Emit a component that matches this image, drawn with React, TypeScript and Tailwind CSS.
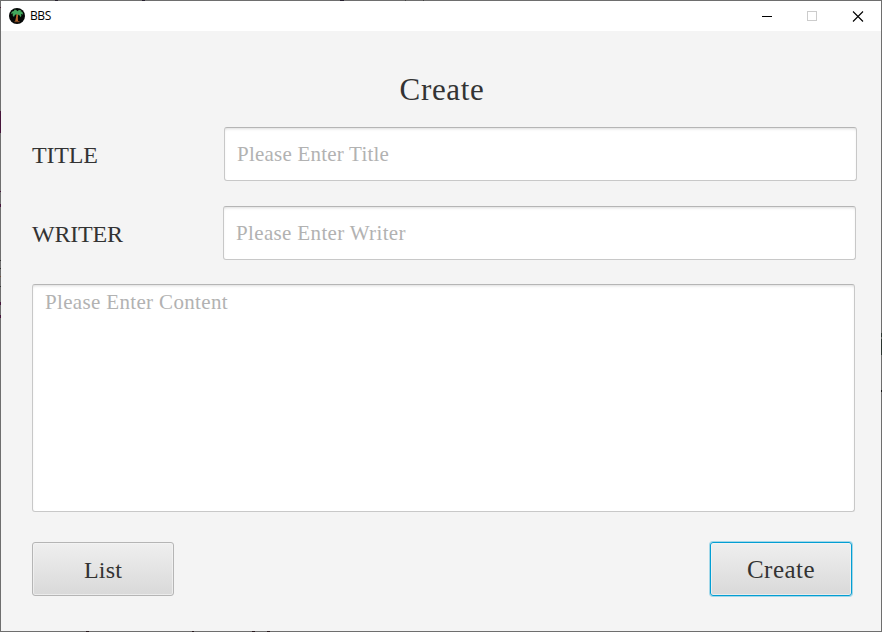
import type { ReactNode } from 'react';

const serif = "font-['Liberation_Serif',serif]";

function PalmIcon() {
  return (
    <svg className="-mt-px ml-2 h-4 w-4 shrink-0" viewBox="0 0 16 16">
      <circle cx="8" cy="8" r="8" fill="#050807" />
      <path d="M7.4 5.5 9.4 5.8C8.8 8.4 8.7 11 9.2 13.5H6.1C6.7 11 7.3 8.5 7.4 5.5Z" fill="#b5652d" />
      <path d="M5.5 13h5v1.2h-5z" fill="#7a4420" />
      <path d="M8.2 6.4C6.5 6 5.6 7 5 9 3.4 8 3.2 6.4 4.4 5.6 3.6 5.4 2.9 5.6 2.2 6.2 2.2 4 3.6 2.9 5.4 3.1L4.8 2C6.6 1.4 8 2.3 8.4 3.3 9.4 1.9 11.2 1.7 12.4 2.7L11.4 3.3C13.2 3.4 14.2 4.8 13.8 6.8 13.2 6 12.6 5.8 12 5.9 12.6 7 12.4 8.4 11.6 9.2 11.2 7.6 10 6.4 8.2 6.4Z" fill="#43a85c" />
    </svg>
  );
}

function TitleBar() {
  return (
    <header className="flex h-[30px] shrink-0 items-center bg-white">
      <PalmIcon />
      <span className="ml-[5px] font-['Open_Sans',sans-serif] text-[12px] leading-4 tracking-[-0.4px] text-black">BBS</span>
      <svg className="ml-auto mr-[17px] h-[11px] w-[102px]" viewBox="0 0 102 11" fill="none" shapeRendering="crispEdges">
        <path d="M0 5.5h10" stroke="#000" />
        <path d="M45.5.5h9v9h-9z" stroke="#ccc" />
        <path d="m91 .5 10 10m0-10-10 10" stroke="#000" strokeWidth="1.1" shapeRendering="auto" />
      </svg>
    </header>
  );
}

function Label({ children }: { children: ReactNode }) {
  return <label className="pt-0.5 text-[24px] leading-7 tracking-[-0.2px] text-[#333]">{children}</label>;
}

const field =
  'block resize-none rounded-[3px] border border-[#c8c8c8] border-t-[#b5b5b5] bg-white text-[21px] shadow-[inset_0_2px_3px_-1px_#ddd] outline-none placeholder:text-[#b2b2b2] placeholder:opacity-100';

const button =
  'h-[54px] rounded-[3px] border bg-linear-to-b from-[#efefef] to-[#d9d9d9] pt-0.5 leading-7 text-[#333]';

const marks = [
  'left-[55px] top-0 h-px w-[3px] bg-[#26202e]',
  'left-[142px] top-0 h-px w-[3px] bg-[#26202e]',
  'left-[340px] top-0 h-px w-[4px] bg-[#26202e]',
  'left-[405px] top-0 h-px w-px bg-[#444]',
  'left-[423px] top-0 h-px w-px bg-[#444]',
  'left-0 top-[7px] h-px w-px bg-[#50213f]',
  'left-0 top-[111px] h-[22px] w-px bg-[#46153a]',
  'left-0 top-[191px] h-px w-px bg-[#46153a]',
  'left-0 top-[204px] h-[3px] w-px bg-[#46153a]',
  'left-0 top-[260px] h-px w-px bg-[#333]',
  'left-0 top-[268px] h-px w-px bg-[#333]',
  'left-0 top-[276px] h-px w-px bg-[#76513b]',
  'left-0 top-[286px] h-px w-px bg-[#333]',
  'left-0 top-[302px] h-[3px] w-px bg-[#46153a]',
  'left-0 top-[315px] h-[3px] w-px bg-[#46153a]',
  'right-0 top-[333px] h-[4px] w-px bg-[#29332e]',
  'right-0 top-[339px] h-[16px] w-px bg-[#29332e]',
  'right-0 top-[390px] h-[2px] w-px bg-[#111]',
  'left-[86px] bottom-0 h-px w-[3px] bg-[#26171c]',
  'left-[192px] bottom-0 h-px w-[2px] bg-[#26171c]',
  'left-[252px] bottom-0 h-px w-[3px] bg-[#26171c]',
  'left-[267px] bottom-0 h-px w-[3px] bg-[#26171c]',
];

export default function App() {
  return (
    <div className={`relative flex h-[632px] w-[882px] flex-col border border-[#6e6e6e] bg-[#f4f4f4] ${serif}`}>
      <TitleBar />
      <main className="flex flex-1 flex-col pl-[31px]">
        <h1 className="mt-[41px] h-[35px] w-[820px] text-center text-[31px] leading-9 tracking-[0.65px] text-[#333]">Create</h1>
        <div className="mt-5 flex h-[54px] w-[825px] items-center justify-between">
          <Label>TITLE</Label>
          <input className={`${field} h-[54px] w-[633px] px-3 tracking-[0.22px]`} placeholder="Please Enter Title" />
        </div>
        <div className="mt-[25px] flex h-[54px] w-[824px] items-center justify-between">
          <Label>WRITER</Label>
          <input className={`${field} h-[54px] w-[633px] px-3 tracking-[0.35px]`} placeholder="Please Enter Writer" />
        </div>
        <textarea
          className={`${field} mt-6 h-[228px] w-[823px] px-3 py-[5px] leading-6 tracking-[0.34px]`}
          placeholder="Please Enter Content"
        />
        <div className="mt-[30px] flex w-[820px] justify-between">
          <button className={`${button} w-[142px] border-[#b5b5b5] text-[24px] tracking-[0.2px] shadow-[inset_0_0_0_1px_#f5f5f5aa]`}>List</button>
          <button className={`${button} w-[142px] border-[#039ed3] text-[25px] tracking-[0.5px] shadow-[0_0_0_1px_#039ed355,inset_0_0_0_1px_#f5f5f5aa]`}>
            Create
          </button>
        </div>
      </main>
      <div className="pointer-events-none absolute -inset-px">
        {marks.map((mark) => (
          <i key={mark} className={`absolute ${mark}`} />
        ))}
      </div>
    </div>
  );
}
